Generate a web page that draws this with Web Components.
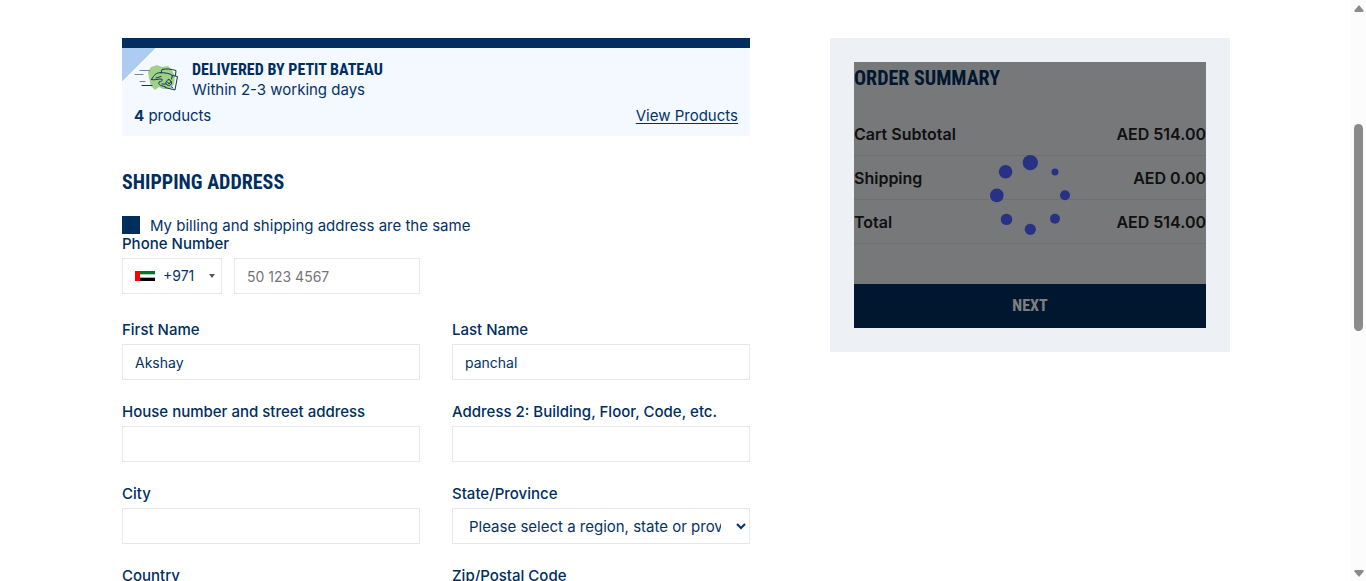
<!DOCTYPE html>
<html lang="en">
<head>
<meta charset="utf-8">
<meta name="viewport" content="width=device-width, initial-scale=1">
<title>Checkout – Shipping</title>
<style>
  body {
    margin: 0;
    --navy: #002e5f;
    --ink: #033366;
    --line: #e8e8e8;
    --heading: "Liberation Sans Narrow", "Roboto Condensed", "Open Sans", sans-serif;
    color: var(--ink);
    font: 15px/20px Inter, "Open Sans", sans-serif;
  }
</style>
</head>
<body>
<checkout-page>
  <delivery-banner slot="form" heading="DELIVERED BY PETIT BATEAU" eta="Within 2-3 working days" count="4"></delivery-banner>
  <address-form slot="form">
    <form-field label="First Name" value="Akshay"></form-field>
    <form-field label="Last Name" value="panchal"></form-field>
    <form-field label="House number and street address"></form-field>
    <form-field label="Address 2: Building, Floor, Code, etc."></form-field>
    <form-field label="City"></form-field>
    <form-field label="State/Province" type="select" value="Please select a region, state or province."></form-field>
    <form-field label="Country" type="select" value="United Arab Emirates"></form-field>
    <form-field label="Zip/Postal Code"></form-field>
  </address-form>
  <order-summary slot="aside"><loading-mask></loading-mask></order-summary>
</checkout-page>

<script>
const define = (name, html, setup) => {
  const template = document.createElement('template');
  template.innerHTML = '<style>*{box-sizing:border-box}</style>' + html;
  customElements.define(name, class extends HTMLElement {
    constructor() {
      super();
      this.attachShadow({ mode: 'open' }).append(template.content.cloneNode(true));
    }
    connectedCallback() { if (setup) setup(this, this.shadowRoot); }
  });
};

define('page-scrollbar', `
  <style>
    :host { display: flex; flex-direction: column; align-items: center; width: 15px; background: #fcfcfc; padding: 5px 0 4px; box-sizing: border-box; }
    svg { display: block; fill: #8b8b8b; flex: none; }
    .track { flex: 1; display: grid; grid-template-rows: 112fr 207fr 239fr; width: 9px; }
    .thumb { grid-row: 2; background: #8b8b8b; border-radius: 5px; }
  </style>
  <svg width="10" height="7" viewBox="0 0 10 7"><path d="M5 0 L9.6 5.6 Q9.8 7 8.6 7 H1.4 Q.2 7 .4 5.6Z"/></svg>
  <div class="track"><div class="thumb"></div></div>
  <svg width="10" height="7" viewBox="0 0 10 7"><path d="M5 7 L9.6 1.4 Q9.8 0 8.6 0 H1.4 Q.2 0 .4 1.4Z"/></svg>
`);

define('checkout-page', `
  <style>
    :host { display: flex; height: 100vh; background: #fff; }
    .view { flex: 1; overflow-y: auto; scrollbar-width: none; }
    main { display: grid; grid-template-columns: minmax(0, 1fr) 400px; gap: 80px; align-items: start; padding: 38px 121px 38px 122px; }
    .form { display: grid; gap: 32px; }
    @media (max-width: 1000px) {
      main { grid-template-columns: minmax(0, 1fr); gap: 32px; padding: 24px; }
    }
  </style>
  <div class="view"><main>
    <div class="form"><slot name="form"></slot></div>
    <slot name="aside"></slot>
  </main></div>
  <page-scrollbar aria-hidden="true"></page-scrollbar>
`);

define('delivery-banner', `
  <style>
    :host { display: block; border-top: 10px solid var(--navy); background: linear-gradient(135deg, #aecbf2 24px, transparent 24px) #f4f8ff; padding: 12px 12px 10px; }
    .top { display: flex; gap: 14px; }
    .top svg { display: block; margin-top: 4px; }
    h3 { margin: 0; font: bold 16px/20px var(--heading); color: var(--navy); }
    p { margin: 0; }
    .bottom { display: flex; justify-content: space-between; margin-top: 6px; }
    a { color: inherit; text-underline-offset: 2px; }
  </style>
  <div class="top">
    <svg width="44" height="28" viewBox="0 0 44 28" fill="none" stroke="#12335c" stroke-linecap="round" stroke-linejoin="round" aria-hidden="true">
      <path d="M17 3 L23 1 L28 3 L34 2 L38 6 L41 12 L40 20 L36 25 L29 25 L25 23 L21 26 L17 22 L15 14 L14 8Z" fill="#a0d184" stroke="none"/>
      <path d="M6 6.500 H16 M1 10.500 H9 M6 17.500 H11" stroke="#6d86a6"/>
      <path d="M8 21.500 H18"/>
      <path d="M27 9 L28 5.500 C32 4.500 37 5 42 6.500 L41.500 11.500 M38 11.500 L43.500 12.500 L41 26 L31 23.500"/>
      <path d="M17.500 15.500 C20 11 22 9 26 8.700 C31 8.500 36 9.500 38.500 11.500 L37.500 15 M17.500 15.500 C20 16.500 23 15 27 15 C30 15.500 28 17.500 25 18 C24 20 26 22 31 22.500 M22 14 L27 12.500"/>
      <path d="M35 15.500 C31 16 31 21 34.500 21.500 C38.500 21.500 38.500 17 35 15.500 M33.500 18 L35 20 L37 17.500 M28 20 L32 20 M37.500 23 L39 24"/>
    </svg>
    <div><h3></h3><p class="eta"></p></div>
  </div>
  <div class="bottom"><p><b></b> products</p><a href="#products">View Products</a></div>
`, (el, root) => {
  root.querySelector('h3').textContent = el.getAttribute('heading');
  root.querySelector('.eta').textContent = el.getAttribute('eta');
  root.querySelector('b').textContent = el.getAttribute('count');
});

define('form-field', `
  <style>
    :host { display: grid; gap: 4px; min-width: 0; }
    label { font-weight: 500; color: var(--navy); }
    input, select { width: 100%; height: 36px; margin: 0; padding: 0 12px; border: 1px solid var(--line); border-radius: 0; background: #fff; color: var(--ink); font: inherit; }
    input { font-size: 14px; }
  </style>
  <label for="control"></label>
`, (el, root) => {
  if (root.querySelector('#control')) return;
  root.querySelector('label').textContent = el.getAttribute('label');
  const value = el.getAttribute('value') || '';
  const select = el.getAttribute('type') === 'select';
  const control = document.createElement(select ? 'select' : 'input');
  control.id = 'control';
  if (select) control.add(new Option(value)); else control.value = value;
  root.append(control);
});

define('phone-field', `
  <style>
    :host { display: grid; gap: 4px; }
    label { font-weight: 500; color: var(--navy); }
    .row { display: grid; grid-template-columns: 100px minmax(0, 1fr); gap: 12px; }
    button, input { height: 36px; margin: 0; padding: 0 12px; border: 1px solid var(--line); border-radius: 0; background: #fff; color: var(--ink); font: inherit; font-size: 14px; }
    input { width: 100%; }
    input::placeholder { color: #757575; }
    button { display: flex; align-items: center; gap: 8px; padding-right: 6px; }
    .arrow { margin-left: auto; }
  </style>
  <label for="phone">Phone Number</label>
  <div class="row">
    <button type="button" aria-label="Country code +971">
      <svg width="20" height="10" viewBox="0 0 20 10" aria-hidden="true"><path fill="#fff" d="M0 0h20v10H0z"/><path fill="#00732f" d="M0 0h20v3.330H0z"/><path d="M0 6.670h20V10H0z"/><path fill="#f00" d="M0 0h5v10H0z"/></svg>
      <span>+971</span>
      <svg class="arrow" width="6" height="4" viewBox="0 0 6 4" aria-hidden="true"><path fill="#555" d="M0 0h6L3 4z"/></svg>
    </button>
    <input id="phone" type="tel" placeholder="50 123 4567">
  </div>
`);

define('address-form', `
  <style>
    :host { display: block; }
    h2 { margin: 0 0 20px; font: bold 20px/28px var(--heading); color: var(--navy); }
    .same { display: flex; gap: 10px; line-height: 20px; height: 18px; }
    .same input { appearance: none; flex: none; width: 18px; height: 18px; margin: 0; border: 1px solid var(--navy); background: #fff; }
    .same input:checked { background: var(--navy); }
    .fields { display: grid; grid-template-columns: repeat(2, minmax(0, 1fr)); column-gap: 32px; }
    .rows { row-gap: 22px; margin-top: 26px; }
  </style>
  <h2>SHIPPING ADDRESS</h2>
  <form>
    <div class="same"><input id="same" type="checkbox" checked><label for="same">My billing and shipping address are the same</label></div>
    <div class="fields"><phone-field></phone-field></div>
    <div class="fields rows"><slot></slot></div>
  </form>
`);

define('order-summary', `
  <style>
    :host { display: block; padding: 24px; background: #edf1f5; }
    .body { position: relative; }
    h2 { margin: 0 0 18px; font: bold 20px/32px var(--heading); color: var(--navy); }
    table { width: 100%; border-collapse: separate; border-spacing: 0; margin-bottom: 40px; color: #222; font-size: 16px; }
    th, td { height: 44px; padding: 0; border-bottom: 1px solid #dcdfe2; font-weight: 600; text-align: left; }
    td { text-align: right; }
    button { display: block; width: 100%; height: 44px; padding: 0; border: 0; background: var(--navy); color: #fff; font: bold 16px/20px var(--heading); }
  </style>
  <div class="body">
    <h2>ORDER SUMMARY</h2>
    <table>
      <tr><th scope="row">Cart Subtotal</th><td>AED 514.00</td></tr>
      <tr><th scope="row">Shipping</th><td>AED 0.00</td></tr>
      <tr><th scope="row">Total</th><td>AED 514.00</td></tr>
    </table>
    <button type="button">NEXT</button>
    <slot></slot>
  </div>
`);

define('loading-mask', `
  <style>
    :host { position: absolute; inset: 0; display: grid; place-items: center; background: rgba(0, 0, 0, .5); }
    svg { display: block; fill: #283284; }
  </style>
  <svg width="80" height="80" viewBox="0 0 80 80" role="img" aria-label="Loading">
    <circle cx="40.300" cy="7.700" r="7.600"/><circle cx="65" cy="17" r="3.500"/>
    <circle cx="75" cy="40.300" r="5"/><circle cx="65" cy="63.700" r="5"/>
    <circle cx="40.300" cy="74.300" r="5.600"/><circle cx="16.500" cy="64.400" r="5.700"/>
    <circle cx="6.800" cy="40.400" r="6.800"/><circle cx="15.600" cy="16.700" r="6.800"/>
  </svg>
`);
</script>
</body>
</html>
